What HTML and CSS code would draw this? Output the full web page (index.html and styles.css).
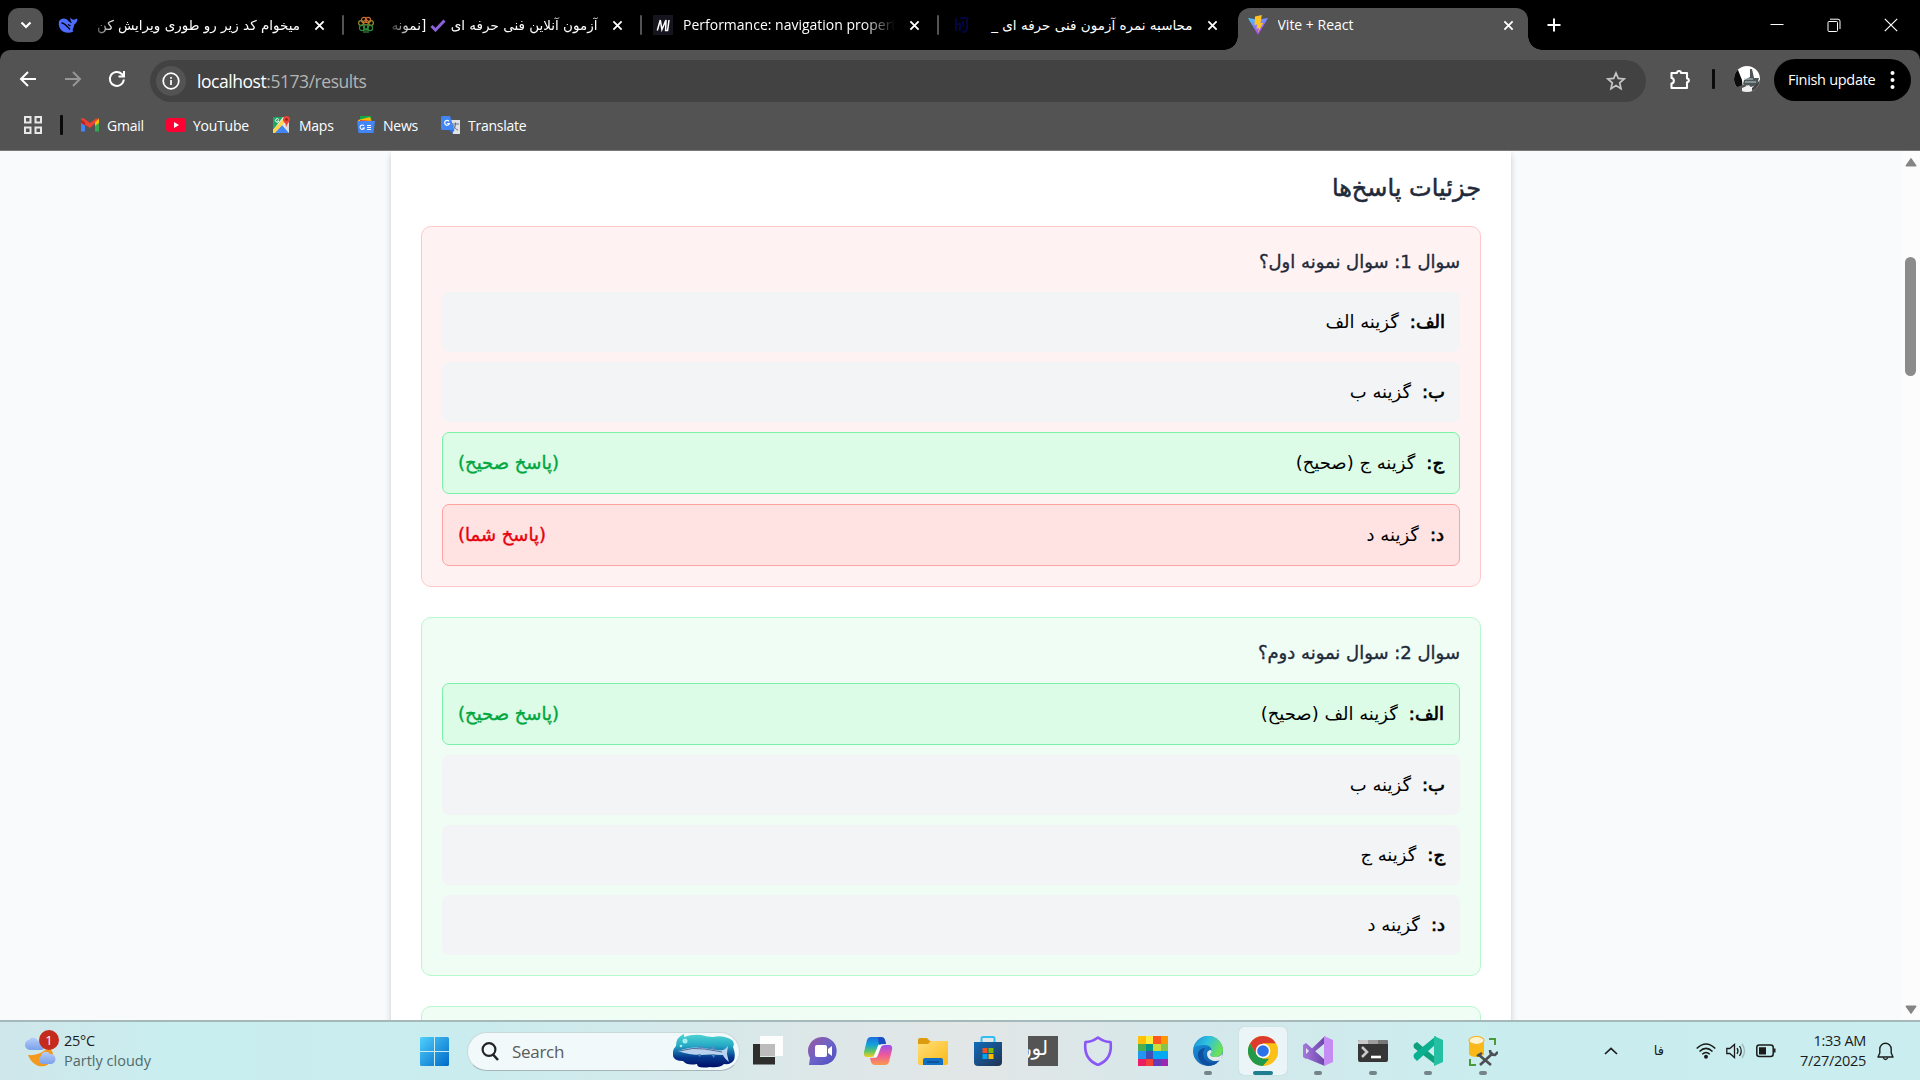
FILE: index.html
```html
<!DOCTYPE html>
<html lang="en">
<head>
<meta charset="utf-8">
<title>Vite + React</title>
<link rel="stylesheet" href="styles.css">
</head>
<body>
<svg class="defs" width="0" height="0">
  <symbol id="close" viewBox="0 0 12 12"><path d="M1.5 1.5 10.5 10.5M10.5 1.5 1.5 10.5" stroke="currentColor" stroke-width="2" fill="none"/></symbol>
  <linearGradient id="gWin" x1="0" y1="0" x2="1" y2="1"><stop offset="0" stop-color="#4fd0fc"/><stop offset="1" stop-color="#0069c8"/></linearGradient>
  <linearGradient id="gSea" x1="0" y1="0" x2="0" y2="1"><stop offset="0" stop-color="#4fd6d2"/><stop offset=".35" stop-color="#25a9c6"/><stop offset=".7" stop-color="#06368c"/><stop offset="1" stop-color="#000d66"/></linearGradient>
  <linearGradient id="gMeet" x1="0" y1="0" x2="1" y2="1"><stop offset="0" stop-color="#9b5a9e"/><stop offset=".5" stop-color="#6c63c8"/><stop offset="1" stop-color="#4c4cc0"/></linearGradient>
  <linearGradient id="gCopA" x1="0" y1="0" x2="0" y2="1"><stop offset="0" stop-color="#1a6fe0"/><stop offset=".4" stop-color="#14a4d8"/><stop offset=".7" stop-color="#5cc46c"/><stop offset="1" stop-color="#f2cf1d"/></linearGradient>
  <linearGradient id="gCopB" x1="0" y1="0" x2="0" y2="1"><stop offset="0" stop-color="#9a50f0"/><stop offset=".5" stop-color="#ee5a9a"/><stop offset="1" stop-color="#fb9a4c"/></linearGradient>
  <linearGradient id="gFold" x1="0" y1="0" x2="1" y2="1"><stop offset="0" stop-color="#ffe07a"/><stop offset="1" stop-color="#fbb917"/></linearGradient>
  <linearGradient id="gStore" x1="0" y1="0" x2="1" y2="1"><stop offset="0" stop-color="#0f6cbd"/><stop offset="1" stop-color="#22324f"/></linearGradient>
  <linearGradient id="gEdgeA" x1="0" y1="0" x2="1" y2=".4"><stop offset="0" stop-color="#1a8fd8"/><stop offset=".5" stop-color="#2fc2df"/><stop offset="1" stop-color="#6be05a"/></linearGradient>
  <linearGradient id="gEdgeB" x1="0" y1="0" x2="1" y2="1"><stop offset="0" stop-color="#1b9de2"/><stop offset="1" stop-color="#0c4a9c"/></linearGradient>
  <linearGradient id="gVs" x1="0" y1="0" x2="1" y2="0"><stop offset="0" stop-color="#a678dd"/><stop offset="1" stop-color="#6b45ab"/></linearGradient>
  <linearGradient id="gVite" x1="0" y1="0" x2=".6" y2="1"><stop offset="0" stop-color="#41d1ff"/><stop offset="1" stop-color="#bd34fe"/></linearGradient>
  <linearGradient id="gCloud" x1="0" y1="0" x2="0" y2="1"><stop offset="0" stop-color="#b5cdf8"/><stop offset="1" stop-color="#7ba1ea"/></linearGradient>
</svg>

<header class="browser">
  <div class="tabstrip">
    <div class="tab-search"><svg width="12" height="12" viewBox="0 0 12 12"><path d="M1.5 3.5 6 8 10.5 3.5" stroke="#fff" stroke-width="2.2" fill="none"/></svg></div>
    <div class="tab">
      <svg class="fav" viewBox="0 0 20 20"><path d="M1 6.500C3 2.500 8 3 10 5.500 11.500 7 13 8.500 14 8 12.500 6 12 4 12.500 2.500 13.500 4 14.500 4.800 16 4.700 17.500 4.500 18.500 3.500 19.500 4 19.500 7 17.500 8.500 16.200 9.500 16 13 13.500 15 15.500 16.500 12 18 8.500 18 5.500 16.800 2 15 0 10.500 1 6.500Z" fill="#4d6bfe"/><path d="M3.500 8C7 8 9.500 12 12 14.500M10 9.500l2.500 1.500" stroke="#000" stroke-width="1.300" fill="none"/></svg>
      <div class="title fa t1" dir="rtl">میخوام کد زیر رو طوری ویرایش کن</div>
      <svg class="x"><use href="#close"/></svg>
    </div>
    <i class="sep"></i>
    <div class="tab">
      <svg class="fav" viewBox="0 0 20 20" fill="none" stroke-width="1.200"><g stroke="#c96a2c"><circle cx="8" cy="5" r="2.600"/><circle cx="12" cy="5" r="2.600"/><circle cx="10" cy="7.500" r="2.500"/></g><g stroke="#9b8a2e"><circle cx="5" cy="8" r="2.400"/><circle cx="15" cy="8" r="2.400"/></g><g stroke="#2f8a3c"><circle cx="6" cy="13" r="2.600"/><circle cx="14" cy="13" r="2.600"/><circle cx="10" cy="12" r="2.500"/><path d="M8 14v4M12 14v4M10 13v5"/></g></svg>
      <div class="title fa t2" dir="rtl">آزمون آنلاین فنی حرفه ای <svg class="check" width="16" height="13" viewBox="0 0 16 13"><path d="M1.500 7 5.500 11 14.500 1.500" stroke="#8c62dc" stroke-width="3" fill="none"/></svg> [نمونه</div>
      <svg class="x"><use href="#close"/></svg>
    </div>
    <i class="sep"></i>
    <div class="tab">
      <svg class="fav" viewBox="0 0 20 20"><path d="M0 0h20v20H0z" fill="#15141f"/><path d="M4.300 15.500 7.300 5l1.600 9.500L13 5l-.4 10.500h2L16 5" fill="none" stroke="#fff" stroke-width="1.500"/></svg>
      <div class="title t3">Performance: navigation property</div>
      <svg class="x"><use href="#close"/></svg>
    </div>
    <i class="sep"></i>
    <div class="tab">
      <svg class="fav" viewBox="0 0 20 20" fill="none" stroke="#02063f" stroke-width="2"><path d="M5 3v13M5 9h4v7M9 3h7v10q0 4-5 4M12 6v6"/></svg>
      <div class="title fa t4" dir="rtl">محاسبه نمره آزمون فنی حرفه ای _</div>
      <svg class="x"><use href="#close"/></svg>
    </div>
    <div class="tab active">
      <svg class="fav" viewBox="0 0 20 20"><path d="M0 3 10 20 20 3 10 4.800Z" fill="url(#gVite)"/><path d="M13.800 0 7 1.500 6.500 10l2.800-.5-.9 4.300 2.600-.6-1.200 5 5.500-10.500-2.800.5Z" fill="#ffc41f"/></svg>
      <div class="title t5">Vite + React</div>
      <svg class="x"><use href="#close"/></svg>
    </div>
    <svg class="plus" width="14" height="14" viewBox="0 0 14 14"><path d="M7 .5v13M.5 7h13" stroke="#fff" stroke-width="2"/></svg>
    <div class="winctl">
      <svg viewBox="0 0 14 14"><path d="M.5 6.500h13" stroke="#fff" stroke-width="1"/></svg>
      <svg viewBox="0 0 14 14" fill="none" stroke="#fff"><rect x="1" y="3.500" width="9.500" height="10" rx="1"/><path d="M3 1.200h8q2 0 2 2V11" /></svg>
      <svg viewBox="0 0 14 14"><path d="M.8.8 13.200 13.200M13.200.8.8 13.200" stroke="#fff" stroke-width="1.200"/></svg>
    </div>
  </div>

  <div class="toolbar">
    <div class="nav">
      <svg viewBox="0 0 20 20" fill="none" stroke="#fff" stroke-width="2"><path d="M18 10H3M10 3 3 10l7 7"/></svg>
      <svg viewBox="0 0 20 20" fill="none" stroke="#969696" stroke-width="2"><path d="M2 10h15M10 3l7 7-7 7"/></svg>
      <svg viewBox="0 0 20 20" fill="none" stroke="#fff" stroke-width="2"><path d="M16.800 10.500A7 7 0 1 1 14.800 5L17 7.200"/><path d="M17 2v5.500h-5.500"/></svg>
    </div>
    <div class="omnibox">
      <span class="info"><svg width="18" height="18" viewBox="0 0 18 18" fill="none" stroke="#fff"><circle cx="9" cy="9" r="7.800" stroke-width="1.700"/><path d="M9 8v5M9 5v1.800" stroke-width="1.700"/></svg></span>
      <span class="url"><b>localhost</b>:5173/results</span>
      <svg class="star" viewBox="0 0 20 20"><path d="M10 2 12.300 7.400 18.200 7.900 13.700 11.800 15 17.600 10 14.500 5 17.600 6.300 11.800 1.800 7.900 7.700 7.400Z" fill="none" stroke="#c6c6c6" stroke-width="1.700"/></svg>
    </div>
    <svg class="puzzle" viewBox="0 0 22 22"><path d="M2.500 5h5.500a2 2 0 0 1 4 0H18v5.500a1.700 1.700 0 0 1 0 3.700V20H2.500v-4.500c3 0 3.200-5.500 0-5.500Z" fill="none" stroke="#fff" stroke-width="2.100" stroke-linejoin="round"/></svg>
    <i class="vbar"></i>
    <svg class="avatar" viewBox="0 0 26 26"><clipPath id="av"><circle cx="13" cy="13" r="13"/></clipPath><g clip-path="url(#av)"><path d="M0 0h26v26H0z" fill="#fff"/><path d="M0 3 4 4 8 14 9 26H0Z" fill="#0b0b0b"/><path d="M16 3h2l2 9h5l-2 7-6 2-8-3 1-4 6-3Z" fill="#4c5558"/><path d="M10 13h9M11 16h11" stroke="#b8cfcd" stroke-width="1"/><path d="M3 21 11 18 17 26H3Z" fill="#555"/><path d="M8 22 15 19 20 26H8Z" fill="#eee"/><path d="M18 22 26 14V26H18Z" fill="#444"/></g></svg>
    <div class="finish"><span>Finish update</span><svg width="5" height="20" viewBox="0 0 5 20" fill="#fff"><circle cx="2.500" cy="3" r="2"/><circle cx="2.500" cy="10" r="2"/><circle cx="2.500" cy="17" r="2"/></svg></div>
  </div>

  <nav class="bookmarks">
    <svg class="apps" viewBox="0 0 18 18" fill="none" stroke="#e8e8e8" stroke-width="2"><path d="M1 1h5.500v5.500H1zM11.500 1H17v5.500h-5.500zM1 11.500h5.500V17H1zM11.500 11.500H17V17h-5.500z"/></svg>
    <i class="vbar"></i>
    <a class="b1"><svg viewBox="0 0 20 20"><path d="M1 4v12.500h4V9z" fill="#4285f4"/><path d="M19 4v12.500h-4V9z" fill="#34a853"/><path d="M15 5.500 19 3.500V8l-4 3z" fill="#fbbc04"/><path d="M1 4Q2 2.500 4 3.500L10 8l6-4.500Q18.500 3 19 4.500L10 13 1 7z" fill="#ea4335"/><path d="M1 4.500 5 7v3.500L1 8z" fill="#c5221f"/><path d="M15 7l4-3v3.500l-4 3z" fill="#fbbc04"/></svg><span>Gmail</span></a>
    <a class="b2"><svg viewBox="0 0 20 20"><rect y="3" width="20" height="14" rx="3.500" fill="#f03"/><path d="M8 7v6l5-3z" fill="#fff"/></svg><span>YouTube</span></a>
    <a class="b3"><svg viewBox="0 0 20 20"><path d="M1 2h16v16H1z" fill="#eee"/><path d="M1 2h10L1 15z" fill="#1fa463"/><path d="M2 18 10 10 17 18z" fill="#4285f4"/><path d="M1 15 11 4l2 3L3 18H1z" fill="#fdd44c"/><path d="M17 8v9l-6-7z" fill="#dadada"/><path d="M14.500 1a3.500 3.500 0 0 1 3.500 3.500C18 7 15 8 14.500 12 14 8 11 7 11 4.500A3.500 3.500 0 0 1 14.500 1" fill="#ea4335"/><circle cx="14.500" cy="4.500" r="1.300" fill="#8c1f17"/><path d="M6.800 4.500A1.800 1.800 0 1 0 7 6H5.300" stroke="#fff" fill="none"/></svg><span>Maps</span></a>
    <a class="b4"><svg viewBox="0 0 20 20"><path d="M4 1h11l1 6H4z" fill="#17a34a"/><path d="m2 5 12-3 2 6-12 4z" fill="#fbbc04"/><path d="m4 5 14 1-1 6H4z" fill="#ea4335"/><path d="M1 6h18l-1.500 12h-15z" fill="#4285f4"/><path d="M8 10.800A2.200 2.200 0 1 0 8.300 13H6.500M11 10.500h4M11 12.500h4M11 14.500h4" stroke="#fff" stroke-width="1.100" fill="none"/></svg><span>News</span></a>
    <a class="b5"><svg viewBox="0 0 20 20"><path d="M8 5h11v14h-7z" fill="#dfe2e6"/><path d="M11 9h7M14.500 7.500V9c0 3-1.500 5-3.500 6M12.500 10c1 3 2.500 4.500 4.500 5" stroke="#637078" fill="none"/><path d="M1.500 1H9l4.500 14h-12Q0 15 0 13.500v-11Q0 1 1.500 1" fill="#4285f4"/><path d="M8.300 15h5.200L11 18.500z" fill="#3367d6"/><path d="M8 6.300A2.400 2.400 0 1 0 8.400 8.500H6.200" stroke="#fff" stroke-width="1.200" fill="none"/></svg><span>Translate</span></a>
  </nav>
</header>

<div class="viewport">
  <main class="sheet" dir="rtl">
    <h2>جزئیات پاسخ‌ها</h2>
    <section class="question wrong">
      <h3>سوال 1: سوال نمونه اول؟</h3>
      <div class="option"><p><b>الف:</b><span>گزینه الف</span></p></div>
      <div class="option"><p><b>ب:</b><span>گزینه ب</span></p></div>
      <div class="option good"><p><b>ج:</b><span>گزینه ج (صحیح)</span></p><em>(پاسخ صحیح)</em></div>
      <div class="option bad"><p><b>د:</b><span>گزینه د</span></p><em>(پاسخ شما)</em></div>
    </section>
    <section class="question right">
      <h3>سوال 2: سوال نمونه دوم؟</h3>
      <div class="option good"><p><b>الف:</b><span>گزینه الف (صحیح)</span></p><em>(پاسخ صحیح)</em></div>
      <div class="option"><p><b>ب:</b><span>گزینه ب</span></p></div>
      <div class="option"><p><b>ج:</b><span>گزینه ج</span></p></div>
      <div class="option"><p><b>د:</b><span>گزینه د</span></p></div>
    </section>
    <section class="question right next"></section>
  </main>
  <div class="scrollbar">
    <svg width="14" height="10" viewBox="0 0 14 10"><path d="M1.500 8.500 7 .8l5.500 7.700q0 1-1 1h-9q-1 0-1-1" fill="#858585"/></svg>
    <i class="thumb"></i>
    <svg width="14" height="10" viewBox="0 0 14 10"><path d="M1.500 1.500 7 9.200l5.500-7.700q0-1-1-1h-9q-1 0-1 1" fill="#858585"/></svg>
  </div>
</div>

<footer class="taskbar">
  <div class="weather">
    <div class="wicon">
      <svg width="32" height="32" viewBox="0 0 32 32"><path d="M5 17a5 5 0 0 1-5-5 5 5 0 0 1 4-5 5 5 0 0 1 9 1 4 4 0 0 1 4 9z" fill="url(#gCloud)" transform="translate(0 -2)"/><path d="M3 20c8 1 16-3 19-7 6 0 8 8 4 14-6 7-18 6-23-7" fill="#f39a1e"/><path d="M17 29a4.500 4.500 0 0 1-1-8 5 5 0 0 1 9-2 5 5 0 0 1 1 10z" fill="url(#gCloud)"/></svg>
      <span class="badge">1</span>
    </div>
    <div class="wtext"><span>25°C</span><small>Partly cloudy</small></div>
  </div>

  <div class="apps-row">
    <svg class="start" viewBox="0 0 29 29" fill="url(#gWin)"><path d="M1.500 0H14v14H0V1.500Q0 0 1.500 0M15 0h12.500Q29 0 29 1.500V14H15zM0 15h14v14H1.500Q0 29 0 27.500zM15 15h14v12.500q0 1.500-1.500 1.500H15z"/></svg>
    <div class="search">
      <svg width="18" height="19" viewBox="0 0 18 19" fill="none" stroke="#222" stroke-width="2.200"><circle cx="8" cy="7.500" r="6.400"/><path d="m12 12.500 5 5.500" stroke-width="2.600"/></svg>
      <span>Search</span>
      <svg class="fish" width="62" height="34" viewBox="0 0 62 34"><path d="M11 3Q20 0 28 1q7 2 12 2 8-2 15 1 8 3 5 9 3 7 1 13-3 5-10 4-4 4-14 3-13 2-13-3-10 2-14-3-9 0-10-5-1-6 3-10 0-9 8-12" fill="url(#gSea)"/><circle cx="12" cy="7" r="2.500" fill="#a8eeee"/><circle cx="8" cy="12" r="1.300" fill="#a8eeee"/><path d="M5 17q12-5 25-3l14 2q6 1 8-1l3-3q-1 6-1 8 1 5 2 8-5-4-6-7-14-1-22 0Q16 21 5 17" fill="#b9d3ee"/><path d="M6 17q14-4 26-2l17 3" stroke="#50699b" fill="none"/><path d="m25 14 3-3 2 3M38 15l2-4 2 5M24 20l3 3 1-3M38 20l3 4 1-4" fill="#5e88bb"/></svg>
    </div>
    <div class="slot"><svg viewBox="0 0 30 30"><path d="M0 8h7v13h15v7.500H0z" fill="#2e2e2c"/><path d="M7 0h23v20H7z" fill="#fdfdfd"/><path d="M7 8h15v12H7z" fill="#bcbcbc"/></svg></div>
    <div class="slot"><svg viewBox="0 0 30 30"><path d="M15 1a14 14 0 1 1-2 27.900L1 29l1-7A14 14 0 0 1 15 1" fill="url(#gMeet)"/><rect x="7" y="9" width="12" height="12" rx="2" fill="#fff"/><path d="m20 13 4-3v10l-4-3z" fill="#fff"/></svg></div>
    <div class="slot"><svg viewBox="0 0 30 30"><path d="M8 1h10q3 0 4 3l1 4h-4q-3 0-4 3l-3 8q-1 2-4 2H4q-4 0-3-5L4 4q1-3 4-3" fill="url(#gCopA)"/><path d="M22 29H12q-3 0-4-3l-1-4h4q3 0 4-3l3-8q1-2 4-2h4q4 0 3 5l-3 12q-1 3-4 3" fill="url(#gCopB)"/><path d="M15 1h3q3 0 4 3l1 4h-4q-2 0-3 1z" fill="#1c4fc4"/><path d="m17 9-5 12" stroke="#fff" stroke-width="3"/></svg></div>
    <div class="slot"><svg viewBox="0 0 30 30"><path d="M0 4q0-2 2-2h7l3 3h16v8H0z" fill="#dd9c10"/><path d="M0 8h10l3-3h16q1 0 1 1v20q0 3-2 3H2q-2 0-2-3z" fill="url(#gFold)"/><path d="M5 29v-5q0-2 2-2h16q2 0 2 2v5z" fill="#1170c4"/><path d="M9 26h12" stroke="#0a4a8c" stroke-width="1.500"/></svg></div>
    <div class="slot"><svg viewBox="0 0 30 30"><path d="M8.500 6V2.500q0-1.500 1.500-1.500h10q1.500 0 1.500 1.500V6" fill="none" stroke="#34bdf0" stroke-width="2"/><path d="M1 6h28v20q0 4-4 4H5q-4 0-4-4z" fill="url(#gStore)"/><path d="M9.500 12h5v5h-5z" fill="#f25022"/><path d="M15.500 12h5v5h-5z" fill="#7fba00"/><path d="M9.500 18h5v5h-5z" fill="#00a4ef"/><path d="M15.500 18h5v5h-5z" fill="#ffb900"/></svg></div>
    <div class="slot"><span class="loor" dir="rtl">لور</span></div>
    <div class="slot"><svg viewBox="0 0 30 30"><path d="M15 1.500Q9 6 2.500 6C1 17 5 25 15 29 25 25 29 17 27.500 6 21 6 15 1.500 15 1.500Z" fill="none" stroke="#8a56f5" stroke-width="2.600" stroke-linejoin="round"/></svg></div>
    <div class="slot"><svg viewBox="0 0 32 32" shape-rendering="crispEdges"><path d="M0 0h8v8H0z" fill="#ffc107"/><path d="M8 0h8v8H8z" fill="#ffeb3b"/><path d="M16 0h8v8h-8z" fill="#ff5722"/><path d="M24 0h8v8h-8z" fill="#ff9800"/><path d="M0 8h8v8H0z" fill="#4caf50"/><path d="M8 8h8v8H8z" fill="#009688"/><path d="M16 8h8v8h-8z" fill="#cddc39"/><path d="M24 8h8v8h-8z" fill="#8bc34a"/><path d="M0 16h8v8H0z" fill="#2196f3"/><path d="M8 16h8v8H8z" fill="#3f51b5"/><path d="M16 16h16v8H16z" fill="#03a9f4"/><path d="M0 24h8v8H0z" fill="#e91e63"/><path d="M8 24h8v8H8z" fill="#f44336"/><path d="M16 24h8v8h-8z" fill="#673ab7"/><path d="M24 24h8v8h-8z" fill="#9c27b0"/></svg></div>
    <div class="slot run"><svg viewBox="0 0 30 30"><circle cx="15" cy="15" r="15" fill="url(#gEdgeB)"/><path d="M1 11C4 3 10 0 15 0c9 0 15 7 15 14 0 5-4 7-8 7-4 0-6-2-4-4 2-3 0-8-7-8-4 0-8 1-10 2" fill="url(#gEdgeA)"/><path d="M12 12c-5 7 0 17 12 15-6 5-15 3-18-4-3-6 1-11 6-11" fill="#0f4f9f"/><path d="M18 17c-2 2 0 4 4 4 3 0 6-1 8-4l-2 7c-8 3-14-1-14-6 0-3 2-4 4-4 1 1 1 2 0 3" fill="#e1e9ea"/></svg></div>
    <div class="slot run current"><svg viewBox="0 0 30 30"><circle cx="15" cy="15" r="15" fill="#fbc116"/><path d="M15 0A15 15 0 0 1 28 7.500H15L8.500 18.800 2 7.500A15 15 0 0 1 15 0" fill="#de3b2f"/><path d="M2 7.500 8.500 18.800 15 22.500h6.500L15 30A15 15 0 0 1 2 7.500" fill="#219a4b"/><path d="M28 7.500H15v15h6.500L15 30A15 15 0 0 0 28 7.500" fill="#fbc116"/><circle cx="15" cy="15" r="7.300" fill="#fff"/><circle cx="15" cy="15" r="5.800" fill="#2b71ea"/></svg></div>
    <div class="slot run"><svg viewBox="0 0 30 30"><path d="M0 9 3 7 22 24v6L0 21zM3 23l-3-2 22-21v7z" fill="url(#gVs)"/><path d="M3 12v6l3-3z" fill="#dfe8ea"/><path d="M21 0 30 4v22l-9 4z" fill="#c58cf3"/></svg></div>
    <div class="slot run"><svg viewBox="0 0 30 30"><path d="M0 6q0-2 2-2h26q2 0 2 2v18q0 2-2 2H2q-2 0-2-2z" fill="#363636"/><path d="M0 8V6q0-2 2-2h8v4z" fill="#c9c9c9"/><path d="M10 4h10v4H10z" fill="#9d9d9d"/><path d="M20 4h8q2 0 2 2v2H20z" fill="#777"/><path d="m4 11 5 5-5 5" fill="none" stroke="#c9c9c9" stroke-width="2.600"/><path d="M13 21h10" stroke="#fff" stroke-width="2.600"/></svg></div>
    <div class="slot run"><svg viewBox="0 0 30 30"><path d="M1 8 4 6 23 22v7L1 12Q0 10 1 8" fill="#0fa17e"/><path d="M1 22l3 3L23 8V0L1 18q-1 2 0 4" fill="#0bb090"/><path d="M21 0 30 4v22l-9 4z" fill="#25bfa3"/></svg></div>
    <div class="slot run"><svg viewBox="0 0 30 30"><path d="M1 4v14c1 4 14 4 15 0V4z" fill="#fbb917"/><ellipse cx="8.500" cy="4.500" rx="7.500" ry="4" fill="#fff3cf" stroke="#f6b52a" stroke-width="1.200"/><path d="M21 3h6v6M2 23v6h6" fill="none" stroke="#4a9a3c" stroke-width="2"/><path d="m11 19 12 10M25 17 12 29" stroke="#4b4f54" stroke-width="2.600"/><path d="M22 14q0 5 5 5l3-3M9 20l5-3" stroke="#4b4f54" stroke-width="2.600" fill="none"/></svg></div>
  </div>

  <div class="tray">
    <svg class="chev" width="14" height="8" viewBox="0 0 14 8"><path d="M1 7 7 1.300 13 7" fill="none" stroke="#1b1b1b" stroke-width="1.700"/></svg>
    <span class="lang" dir="rtl">فا</span>
    <svg class="wifi" width="20" height="16" viewBox="0 0 20 16" fill="none" stroke="#1b1b1b" stroke-width="1.500"><path d="M.7 5.500Q10-3.500 19.300 5.500M3.500 8.500q6.500-6.300 13 0M6.200 11.300q3.800-3.500 7.600 0"/><circle cx="10" cy="13.800" r="1.200" fill="#1b1b1b"/></svg>
    <svg class="vol" width="20" height="16" viewBox="0 0 20 16" fill="none" stroke="#1b1b1b" stroke-width="1.300"><path d="M.8 5.500v5h3L8.500 14.500v-13L3.800 5.500zM11 5.200q2 2.800 0 5.600M13.500 3q3.500 5 0 10"/><path d="M16 1q5 7 0 14" stroke="#9fb9bb"/></svg>
    <svg class="bat" width="20" height="14" viewBox="0 0 20 14"><rect x=".8" y="1" width="16.400" height="11.500" rx="2.500" fill="none" stroke="#1b1b1b" stroke-width="1.500"/><path d="M3 3.200h7v7.200H3zM18 4.500h1.500v4H18z" fill="#1b1b1b"/></svg>
    <div class="clock"><span>1:33 AM</span><span>7/27/2025</span></div>
    <svg class="bell" width="17" height="19" viewBox="0 0 17 19" fill="none" stroke="#1b1b1b" stroke-width="1.400"><path d="M2.800 11V7a5.700 5.700 0 0 1 11.400 0v4l1.800 4H1z" stroke-linejoin="round"/><path d="M6 15.500q2.500 4 5 0"/></svg>
  </div>
</footer>
</body>
</html>
```
FILE: styles.css
```css
* { box-sizing: border-box; margin: 0; padding: 0; }
html, body { height: 100%; }
body {
  display: flex; flex-direction: column; width: 1920px; height: 1080px; overflow: hidden;
  font-family: "Open Sans", "DejaVu Sans", sans-serif; background: #f9fafb;
}
svg { display: block; flex: none; }
.defs { position: absolute; }

.browser { height: 151px; flex: none; background: #000; border-bottom: 1px solid #7b7878; color: #fff; }
.tabstrip { height: 50px; display: flex; align-items: center; position: relative; background: #000; }
.tab-search { width: 35px; height: 34px; margin-left: 8px; margin-right: 4px; border-radius: 11px; background: #535353; display: flex; align-items: center; justify-content: center; }
.tab { width: 295px; height: 50px; display: flex; align-items: center; padding-left: 11px; }
.sep { width: 2px; height: 20px; margin-right: 0.5px; background: #535353; flex: none; border-radius: 1px; }
.fav { width: 20px; height: 20px; margin-right: 10px; }
.title { width: 212px; font-size: 14px; line-height: 24px; white-space: nowrap; overflow: hidden; -webkit-mask-image: linear-gradient(to right, #000 85%, transparent); mask-image: linear-gradient(to right, #000 85%, transparent); }
.title.fa { font-family: "DejaVu Sans", sans-serif; font-size: 13.5px; -webkit-mask-image: linear-gradient(to left, #000 88%, transparent); mask-image: linear-gradient(to left, #000 88%, transparent); }
.title.t4, .title.t5 { -webkit-mask-image: none; mask-image: none; }
.check { display: inline-block; vertical-align: -2px; }
.x { width: 11px; height: 11px; margin-left: 14px; color: #fff; }
.tab.active { width: 290px; height: 42px; align-self: flex-end; margin-left: 3px; padding-left: 10px; border-radius: 12px 12px 0 0; background: #535353; position: relative; padding-bottom: 8px; }
.tab.active::before, .tab.active::after { content: ""; position: absolute; bottom: 0; width: 14px; height: 14px; }
.tab.active::before { left: -14px; background: radial-gradient(circle at 0 0, transparent 13.5px, #535353 14px); }
.tab.active::after { right: -14px; background: radial-gradient(circle at 100% 0, transparent 13.5px, #535353 14px); }
.tab.active .title { width: 220px; }
.tab.active .x { margin-left: 5px; }
.plus { margin-left: 19px; }
.winctl { display: flex; gap: 43px; margin-left: auto; margin-right: 22px; }
.winctl svg { width: 14px; height: 14px; }

.toolbar { height: 54px; display: flex; align-items: center; background: #535353; border-radius: 10px 10px 0 0; padding: 4px 9px 0 18px; }
.nav { display: flex; gap: 24.5px; width: 132px; }
.nav svg { width: 20px; height: 20px; }
.omnibox { width: 1496px; height: 42px; margin-top: 4px; border-radius: 21px; background: #424242; display: flex; align-items: center; padding: 0 20px 0 6px; }
.info { width: 30px; height: 30px; border-radius: 50%; background: #535353; display: flex; align-items: center; justify-content: center; }
.url { margin-left: 11px; font-size: 17.5px; letter-spacing: -.45px; color: #b4b4b4; flex: 1; }
.url b { font-weight: 400; color: #fff; }
.star { width: 20px; height: 20px; }
.puzzle { width: 22px; height: 22px; margin-left: 23px; }
.vbar { width: 3px; height: 20px; background: #0a0a0a; border-radius: 1px; }
.toolbar .vbar { margin-left: 21px; }
.avatar { width: 26px; height: 26px; margin-left: 19px; }
.finish { width: 137px; height: 42px; margin-left: 14px; margin-top: 1px; border-radius: 21px; background: #000; display: flex; align-items: center; font-size: 14.500px; letter-spacing: -.3px; padding-left: 14px; }
.finish span { width: 102px; white-space: nowrap; }

.bookmarks { height: 46px; display: flex; align-items: center; background: #535353; padding-left: 24px; padding-bottom: 4px; font-size: 14px; letter-spacing: -.25px; }
.apps { width: 18px; height: 18px; }
.bookmarks .vbar { margin-left: 18px; }
.bookmarks a { display: flex; align-items: center; gap: 7px; white-space: nowrap; }
.bookmarks a svg { width: 20px; height: 20px; }
.b1 { width: 86px; margin-left: 17px; }
.b2 { width: 106px; }
.b3 { width: 84px; }
.b4 { width: 85px; }

.viewport { height: 869px; flex: none; display: flex; justify-content: flex-end; overflow: hidden; font-family: "DejaVu Sans", sans-serif; }
.sheet { width: 1120px; height: 1100px; margin-right: 392px; flex: none; background: #fff; padding: 20px 30px; box-shadow: 0 5px 8px rgba(0,0,0,.1), 0 2px 5px rgba(0,0,0,.1); }
.sheet h2 { font-size: 24px; line-height: 35px; margin-bottom: 20px; font-weight: 400; color: #1e2939; -webkit-text-stroke: .5px #1e2939; }
.question { border: 1px solid; border-radius: 10px; padding: 20px; margin-bottom: 30px; display: flex; flex-direction: column; gap: 10px; }
.question.wrong { background: #fef2f2; border-color: #ffc9c9; }
.question.right { background: #f0fdf4; border-color: #b9f8cf; }
.question.next { height: 300px; }
.question h3 { font-size: 18px; line-height: 30px; margin-bottom: 5px; font-weight: 400; color: #1e2939; -webkit-text-stroke: .35px #1e2939; }
.option { display: flex; justify-content: space-between; padding: 15px; border-radius: 7px; background: #f3f4f6; font-size: 18px; line-height: 30px; color: #000; }
.option p { display: flex; gap: 11px; }
.option b { font-weight: 400; -webkit-text-stroke: .7px #000; }
.option em { font-style: normal; -webkit-text-stroke: .4px currentColor; }
.option.good { background: #dcfce7; border: 1px solid #7bf1a8; }
.option.bad { background: #ffe2e2; border: 1px solid #ffa2a2; }
.good em { color: #00a63e; }
.bad em { color: #e7000b; }
.scrollbar { width: 19px; height: 869px; margin-left: -19px; background: #fcfcfc; display: flex; flex-direction: column; align-items: center; padding: 6px 0 5px; }
.sheet + .scrollbar { margin-left: 0; }
.sheet { margin-right: 390px; }
.scrollbar .thumb { width: 11px; height: 119px; border-radius: 6px; background: #8b8b8b; margin-top: 90px; margin-bottom: auto; }

.taskbar { height: 60px; flex: none; border-top: 2px solid #a5b8ba; background: linear-gradient(to right, #cfe6ea 0, #c9eeef 170px, #caecee 480px, #dde7e8 820px, #e2e6e6 980px, #d5e8eb 1200px, #c9edee 1500px, #caeeef 1920px); display: flex; align-items: center; color: #1b1b1b; }
.weather { width: 420px; display: flex; align-items: center; padding-left: 25px; }
.wicon { width: 32px; height: 32px; position: relative; }
.badge { position: absolute; left: 14px; top: -5px; width: 20px; height: 20px; border-radius: 50%; background: #c42b1c; color: #fff; font-size: 13px; line-height: 20px; text-align: center; }
.wtext { margin-left: 7px; display: flex; flex-direction: column; font-size: 14.500px; line-height: 20px; letter-spacing: -.3px; }
.wtext small { font-size: 14.500px; color: #51696b; letter-spacing: 0; }
.apps-row { display: flex; align-items: center; height: 58px; }
.start { width: 29px; height: 29px; }
.search { width: 273px; height: 39px; margin-left: 18px; margin-right: 4px; border-radius: 20px; background: #f1f9fa; border: 1px solid #c9d9db; border-bottom-color: #a6b6b8; display: flex; align-items: center; padding: 0 4px 0 13px; }
.search span { margin-left: 13px; flex: 1; font-size: 17px; letter-spacing: -.3px; color: #5b5b5b; }
.slot { width: 48px; height: 48px; margin-right: 7px; display: flex; align-items: center; justify-content: center; position: relative; border-radius: 5px; }
.slot svg { width: 30px; height: 30px; }
.slot.run::after { content: ""; position: absolute; bottom: 0; left: 20px; width: 8px; height: 4px; border-radius: 2px; background: #748487; }
.slot.current { background: #ebf5f7; box-shadow: 0 0 1px #9cb4b8; }
.slot.current::after { width: 20px; left: 14px; background: #1f7f91; }
.loor { width: 30px; height: 30px; background: #545454; color: #fff; font: 20px/24px "DejaVu Sans", sans-serif; overflow: hidden; padding-right: 10px; white-space: nowrap; }
.tray { margin-left: auto; display: flex; align-items: center; padding-right: 26px; }
.lang { font: 13px/20px "DejaVu Sans", sans-serif; margin-left: 36px; }
.wifi { margin-left: 32px; }
.vol { margin-left: 10px; }
.bat { margin-left: 10px; }
.clock { width: 90px; display: flex; flex-direction: column; text-align: right; font-size: 14.500px; line-height: 20px; letter-spacing: -.3px; }
.bell { margin-left: 11px; }
```
